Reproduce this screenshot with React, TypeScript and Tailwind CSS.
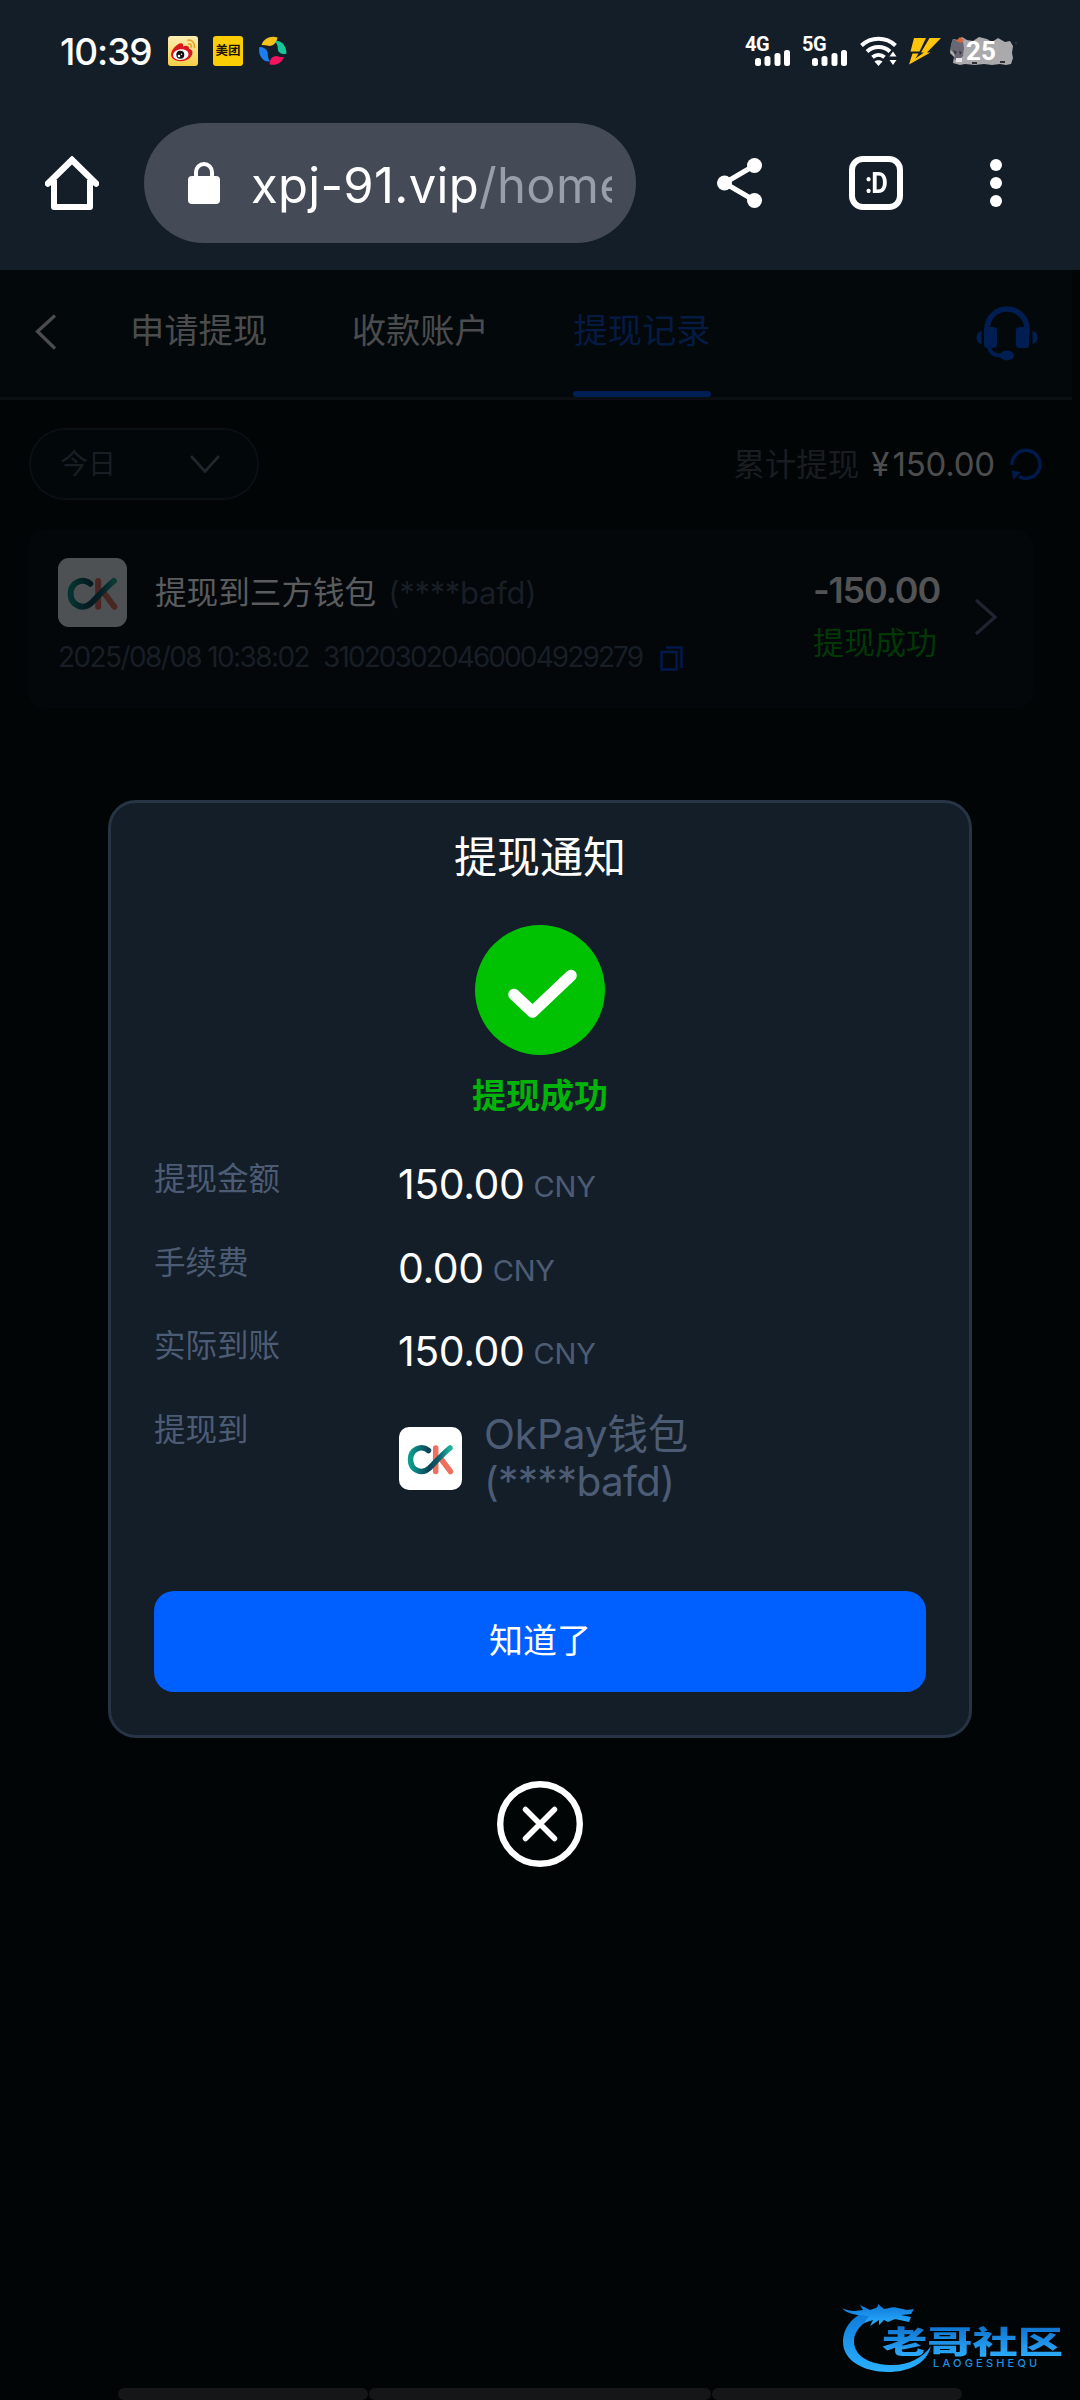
const AppIcons = () => {
   return (
      <div className="flex items-center gap-[15px]">
         <svg className="h-[30px] w-[30px]" viewBox="0 0 30 30">
            <defs>
               <linearGradient id="weibo" x1="0" y1="0" x2="0" y2="1">
                  <stop offset="0" stopColor="#fbeeb4" />
                  <stop offset="1" stopColor="#f7cf45" />
               </linearGradient>
            </defs>
            <rect width="30" height="30" rx="3" fill="url(#weibo)" />
            <path
               d="M3 18.5C3 14 9 7.5 13 7.3c2.200 0 2.400 1.600 2 3.200 2.500-1.200 6.300-1.300 6 2.200 3 .8 4 3 3.300 5.300C23 22.500 18 25.200 13 25.200 7.500 25.200 3 22.500 3 18.500Z"
               fill="#d9181e"
            />
            <ellipse cx="12.800" cy="18.600" rx="7.800" ry="5.300" fill="#fff" transform="rotate(-6 12.800 18.600)" />
            <circle cx="12.300" cy="18.800" r="4" fill="#111" />
            <circle cx="11" cy="20" r="1.300" fill="#fff" />
            <circle cx="13.500" cy="18.200" r=".7" fill="#fff" />
            <path d="M20 4.300c4-.7 7.300 2.800 6.300 7M20.500 8c2-.3 3.300 1.200 2.700 3" stroke="#e9a32a" strokeWidth="1.700" fill="none" strokeLinecap="round" />
         </svg>
         <div className="flex h-[30px] w-[30px] items-center justify-center rounded-[3px] bg-[#fccc05]">
            <span className="text-[12.5px] leading-none font-bold text-[#1c1400]">美团</span>
         </div>
         <svg className="h-[30px] w-[30px]" viewBox="0 0 30 30">
            <path d="M3.500 9C6 2 13-.5 19.500 1.500c-.5 4.500-3 7.500-7.500 8.500Q7 9 3.500 9Z" fill="#f6c21b" />
            <path d="M17.500 5.500c5-2 11 4 11 12-4 1.500-7 0-8.500-3Q20 9 17.500 5.500Z" fill="#19c79a" />
            <path d="M26 21c-2.500 6.500-8.500 9-14.500 7.300 0-4.500 2.500-8 7-8.300Q22 21.500 26 21Z" fill="#f3145c" />
            <path d="M1.500 11C6 11 9.500 13.500 9.800 17.500q-.3 4 2 8C4.500 26.500-.5 18 1.500 11Z" fill="#1d7df2" />
         </svg>
      </div>
   )
}

const Signal = ({ label }: { label: string }) => {
   return (
      <div className="relative h-[30px] w-[45px]">
         <span className="absolute -top-[2px] left-0 font-[Roboto] text-[20px] leading-none font-bold tracking-[-0.5px]">{label}</span>
         <svg className="absolute right-0 bottom-0 h-4 w-[35px]" viewBox="0 0 35 16" fill="#fff">
            <rect x="0" y="8" width="6" height="8" rx="2.500" />
            <rect x="9.500" y="6" width="6" height="10" rx="2.500" />
            <rect x="19.500" y="3" width="6" height="13" rx="2.500" />
            <rect x="29" y="0" width="6" height="16" rx="2.500" />
         </svg>
      </div>
   )
}

const StatusBar = () => {
   return (
      <div className="flex h-[102px] items-center justify-between pr-[62px] pl-[60px]">
         <div className="flex items-center">
            <span className="w-[108px] text-[37px] leading-none font-medium tracking-[-1.1px] whitespace-nowrap">10:39</span>
            <AppIcons />
         </div>
         <div className="flex items-center">
            <Signal label="4G" />
            <div className="w-3" />
            <Signal label="5G" />
            <svg className="ml-[13px] h-[30px] w-[38px]" viewBox="0 0 38 30" fill="none" stroke="#fff" strokeWidth="4">
               <path d="M1.500 9.500C11 .5 26 .5 35.500 9.500" />
               <path d="M7 15.500c6.500-6 16.500-6 23 0" />
               <path d="M12.500 21.300c3.500-3 8.500-3 12 0" />
               <path d="M14.500 25.500c2-1.800 6-1.800 8 0L18.500 30Z" fill="#fff" stroke="none" />
               <path d="M33 15.500l3.500 5h-7ZM33 29l3.500-5h-7Z" fill="#fff" stroke="none" />
            </svg>
            <svg className="ml-[10px] h-[28px] w-[34px]" viewBox="0 0 34 28" fill="#ffc40c">
               <path d="M6 1h12l-6.500 13.500H2.500Z" />
               <path d="M21.500 1H33L19 15.500h3.500L1 27.500 4.500 16.500h6L7.500 21.500 16 15.500h-3Z" />
            </svg>
            <div className="relative ml-[6px] h-[30px] w-[70px]">
               <svg className="h-[30px] w-[70px]" viewBox="0 0 70 30">
                  <path d="M3 9 5 3l5 1 4-3 5 3 6 1 6-4 8 2 5 3 6-4 7 4 5-1 3 5-1 7 1 5-2 6-5 1-6-1-8 1-8-1-9 1-10-1-5 1-7-2 1-6-4-4Z" fill="#aaa9ab" />
                  <path d="M3 9 5 3l5 2 5 1 1 6-1 8-5 5-4-2 1-5-4-4Z" fill="#696773" />
                  <path d="M8 5l4-4 4 3-3 3Z" fill="#d8653c" />
                  <path d="M5 14l4 2-2 3ZM11 15l3 1-2 3Z" fill="#38323c" />
                  <path d="M8 22h6v4H8Z" fill="#e8e6e8" />
                  <path d="M24 27h5M52 26h5M67 6l2 2" stroke="#303037" strokeWidth="2" />
               </svg>
               <span className="absolute top-[2px] left-[18px] font-[Roboto] text-[26px] leading-none font-bold">25</span>
            </div>
         </div>
      </div>
   )
}

const BrowserBar = () => {
   return (
      <div className="flex h-[168px] items-center pb-1.5 pl-[45px]">
         <svg className="h-[54px] w-[54px]" viewBox="0 0 54 54" fill="none" stroke="#fff" strokeWidth="6" strokeLinejoin="round">
            <path d="M3 27.500 27 4l24 23.500" strokeWidth="6.500" strokeLinecap="round" strokeLinejoin="miter" />
            <path d="M9 24v27h36V24" />
         </svg>
         <div className="ml-[45px] flex h-[120px] w-[492px] items-center rounded-full bg-[#444b56] pr-6 pl-11">
            <svg className="h-[42px] w-8 shrink-0" viewBox="0 0 32 42">
               <rect y="14" width="32" height="28" rx="4" fill="#fff" />
               <path d="M8 16v-6a8 8 0 0 1 16 0v6" fill="none" stroke="#fff" strokeWidth="4" />
            </svg>
            <div className="ml-[31px] w-[361px] overflow-hidden pt-[5px] text-[49px] leading-[64px] tracking-[0.3px] whitespace-nowrap">
               xpj-91.vip<span className="text-[#9a9ea8]">/home</span>
            </div>
         </div>
         <svg className="ml-[81px] h-[50px] w-[45px]" viewBox="0 0 45 50" fill="#fff">
            <path d="M37.500 7.500 7.500 25l30 17.500" fill="none" stroke="#fff" strokeWidth="5" />
            <circle cx="37.500" cy="7.500" r="7.500" />
            <circle cx="7.500" cy="25" r="7.500" />
            <circle cx="37.500" cy="42.500" r="7.500" />
         </svg>
         <div className="ml-[87px] flex h-[54px] w-[54px] items-center justify-center rounded-[14px] border-[6px] border-white">
            <span className="font-[Roboto] text-[30px] leading-none font-bold tracking-[-1px]">
               <span className="inline-block scale-x-[0.85]">:D</span>
            </span>
         </div>
         <div className="ml-[87px] flex flex-col gap-1.5">
            <div className="h-3 w-3 rounded-full bg-white" />
            <div className="h-3 w-3 rounded-full bg-white" />
            <div className="h-3 w-3 rounded-full bg-white" />
         </div>
      </div>
   )
}

const WalletLogo = ({ className }: { className: string }) => {
   return (
      <svg className={className} viewBox="0 0 63 63">
         <defs>
            <linearGradient id="okpay" x1="0" y1="0" x2="1" y2="0">
               <stop offset="0" stopColor="#0b9c8c" />
               <stop offset=".45" stopColor="#0c4459" />
               <stop offset=".7" stopColor="#0c5a68" />
               <stop offset="1" stopColor="#1fb39c" />
            </linearGradient>
         </defs>
         <rect width="63" height="63" rx="10" fill="#fff" />
         <g fill="none" strokeWidth="5.500" strokeLinecap="round" strokeLinejoin="round">
            <path d="M36.700 21v23.500M42 32l9.500 12.500" stroke="#ee6f5d" />
            <path d="M29.500 23.500C22 17.500 11.500 22.500 11.500 32.500c0 11 11.500 15.500 19 8.500 5-5 12-13 20.500-20" stroke="url(#okpay)" />
         </g>
      </svg>
   )
}

const PageHeader = () => {
   return (
      <div className="flex h-[130px] w-[1072px] items-center border-b-[3px] border-[#0c0f11] bg-[#03080b] pl-[35px]">
         <svg className="mb-[3px] h-[36px] w-[22px]" viewBox="0 0 22 36" fill="none" stroke="#4a4c4e" strokeWidth="3.300">
            <path d="M20 1.500 2.500 17.500l17.500 17" />
         </svg>
         <div className="ml-[73px] flex h-full gap-[84.500px] text-[34.300px] leading-none text-[#4b4c4d]">
            <div className="flex items-center pb-1">申请提现</div>
            <div className="flex items-center pb-1">收款账户</div>
            <div className="relative flex items-center pb-1 text-[#051b44]">
               提现记录
               <div className="absolute inset-x-0 bottom-0 h-1.5 rounded-full bg-[#001f55]" />
            </div>
         </div>
         <svg className="mb-px ml-[265px] h-[57px] w-[62px]" viewBox="0 0 62 57" fill="#001e52">
            <path d="M11 30V24a20 20 0 0 1 40 0v6" fill="none" stroke="#001e52" strokeWidth="5.500" />
            <path d="M8 25q0-3 3-3h6q4 0 4 3v15q0 3-4 3H11q-3 0-3-3ZM40 25q0-3 4-3h6q3 0 3 3v15q0 3-3 3h-6q-4 0-4-3Z" />
            <path d="M5.500 26v13Q.5 38 .5 32.500T5.500 26ZM56.500 26v13q5-1 5-6.500T56.500 26Z" />
            <path d="M13 42q2 9 12 8.500h6" fill="none" stroke="#001e52" strokeWidth="4" />
            <ellipse cx="31" cy="50.500" rx="7" ry="5" />
         </svg>
      </div>
   )
}

const FilterRow = () => {
   return (
      <div className="mt-7 flex h-[72px] items-center justify-between pr-[38px] pl-[29px]">
         <div className="flex h-full w-[230px] items-center justify-between rounded-full border-2 border-[#0a0f13] bg-[#02070a] pr-[37px] pl-[29px]">
            <span className="text-[28px] leading-none text-[#191e24]">今日</span>
            <svg className="h-[18px] w-[30px]" viewBox="0 0 30 18" fill="none" stroke="#20262c" strokeWidth="2.800">
               <path d="m1 1 14 15.500L29 1" />
            </svg>
         </div>
         <div className="flex items-center leading-none">
            <span className="pt-0.5 text-[31.500px] text-[#191d22]">累计提现</span>
            <span className="ml-3 text-[33px] text-[#4c4d4e]">
               <span className="mr-[3px]">¥</span>
               <span className="tracking-[-0.2px]">150.00</span>
            </span>
            <svg className="ml-[15px] h-8 w-8" viewBox="0 0 32 32" fill="none" stroke="#001a4c" strokeWidth="3.500">
               <path d="M2 17A14 14 0 1 1 9 28.500" />
               <path d="M1.500 22.500 11 24l-7.500 8Z" fill="#001a4c" stroke="none" />
            </svg>
         </div>
      </div>
   )
}

const RecordCard = () => {
   return (
      <div className="mt-[30px] ml-7 flex h-[178px] w-[1005px] items-start rounded-[16px] bg-[#03070a] pl-[30px]">
         <div className="w-[755px] pt-[28px]">
            <div className="flex items-center leading-none">
               <div className="relative h-[69px] w-[69px]">
                  <WalletLogo className="h-full w-full" />
                  <div className="absolute inset-0 bg-[#03070a]/70" />
               </div>
               <span className="ml-7 text-[31.600px] text-[#5a5c5e]">提现到三方钱包</span>
               <span className="ml-3 text-[31px] tracking-[-0.3px] text-[#181e26]">(****bafd)</span>
            </div>
            <div className="mt-[16px] flex items-center text-[28px] leading-none whitespace-nowrap text-[#181e26]">
               <span className="w-[265px] tracking-[-1.6px]">2025/08/08 10:38:02</span>
               <span className="w-[337px] tracking-[-1.900px]">310203020460004929279</span>
               <svg className="mt-[3px] h-[25px] w-[23px]" viewBox="0 0 23 25" fill="none" stroke="#001a4c" strokeWidth="2.500">
                  <path d="M1.500 6h15v17.500h-15ZM6 1.500h15.500V22" />
               </svg>
            </div>
         </div>
         <div className="flex w-[124px] flex-col leading-none">
            <span className="mt-[42px] text-[36px] font-semibold tracking-[-1.200px] whitespace-nowrap text-[#525354]">-150.00</span>
            <span className="mt-[19px] text-[31px] text-[#023706]">提现成功</span>
         </div>
         <svg className="mt-[69px] ml-[37px] h-9 w-6" viewBox="0 0 24 36" fill="none" stroke="#1f2430" strokeWidth="3.300">
            <path d="m2 1 19 17L2 35" />
         </svg>
      </div>
   )
}

const DetailRow = ({ label, value }: { label: string; value: string }) => {
   return (
      <div className="flex h-[83.500px] items-start leading-none">
         <span className="w-[244px] pt-px text-[31.500px] text-[#4d5c75]">{label}</span>
         <div className="flex items-start pt-[2px]">
            <span className="text-[41px] tracking-[-0.400px] text-white">{value}</span>
            <span className="mt-[8px] ml-[9px] text-[29px] tracking-[-0.200px] text-[#4d5c75]">CNY</span>
         </div>
      </div>
   )
}

const rows = [
   { label: '提现金额', value: '150.00' },
   { label: '手续费', value: '0.00' },
   { label: '实际到账', value: '150.00' },
]

const NoticeModal = () => {
   return (
      <div className="absolute inset-x-0 top-[800px] flex flex-col items-center">
         <div className="flex h-[938px] w-[864px] flex-col items-center rounded-[28px] border-[3px] border-[#263445] bg-[#141e28] leading-none">
            <h1 className="mt-[33px] text-[43px]">提现通知</h1>
            <svg className="mt-[46px] h-[130px] w-[130px]" viewBox="0 0 130 130">
               <circle cx="65" cy="65" r="65" fill="#00c202" />
               <path d="M39 69.500 57.500 87 96 50.500" fill="none" stroke="#fff" strokeWidth="11.500" strokeLinecap="round" strokeLinejoin="round" />
            </svg>
            <div className="mt-[24px] text-[34px] font-bold text-[#00b40a]">提现成功</div>
            <div className="mt-[49px] w-full pl-[43px]">
               {rows.map((row) => (
                  <DetailRow key={row.label} label={row.label} value={row.value} />
               ))}
               <div className="flex items-start">
                  <span className="w-[245px] pt-px text-[31.500px] text-[#4d5c75]">提现到</span>
                  <WalletLogo className="mt-[14px] h-[63px] w-[63px]" />
                  <div className="-mt-[2px] ml-[22px] text-[40.500px] leading-[47px] tracking-[-0.100px] text-[#4d5c75]">
                     OkPay钱包
                     <br />
                     <span className="tracking-[-0.700px]">(****bafd)</span>
                  </div>
               </div>
            </div>
            <button className="mt-auto mb-[43px] h-[101px] w-[772px] rounded-[20px] bg-[#0060ff] pb-0.5 text-[34px] text-white">知道了</button>
         </div>
         <svg className="mt-[43px] h-[86px] w-[86px]" viewBox="0 0 86 86" fill="none" stroke="#fff">
            <circle cx="43" cy="43" r="39.800" strokeWidth="6.400" />
            <path d="m28.500 28.500 29 29M57.500 28.500l-29 29" strokeWidth="5.500" strokeLinecap="round" />
         </svg>
      </div>
   )
}

const Watermark = () => {
   return (
      <div className="absolute top-[2298px] left-[842px] h-[76px] w-[224px]">
         <svg className="h-full w-[92px]" viewBox="0 0 92 76">
            <defs>
               <linearGradient id="dragon" x1="0" y1="0" x2="0" y2="1">
                  <stop offset="0" stopColor="#0d78d8" />
                  <stop offset="1" stopColor="#2bb0ff" />
               </linearGradient>
            </defs>
            <g fill="url(#dragon)">
               <path d="M28 12C9 18 1 31 1 44c0 18 20 30 45 30 20 0 39-8 43-26-8 12-23 19-38 19C29 67 12 59 12 43c0-10 8-18 19-23Z" />
               <path d="M0 10c8 4 15 3 21 2l-3-5 10 5c6-2 8-2 8-6l6 5c6-1 9-3 14-1l9 2 7-1-3 5-10 1 10 2-2 5-14-3-7 3-4-2-5 5v-5l-9 6 3-6-9 3 5-7C18 17 5 17 0 10Z" />
            </g>
         </svg>
         <div className="absolute top-[27px] left-[40px] origin-left scale-x-[1.46] bg-gradient-to-b from-[#0f70cc] to-[#2fb0ff] bg-clip-text text-[31px] leading-[34px] font-black whitespace-nowrap text-transparent">
            老哥社区
         </div>
         <div className="absolute top-[60px] left-[91px] text-[11px] leading-none font-medium tracking-[3.200px] text-[#1f8fe0]">LAOGESHEQU</div>
      </div>
   )
}

export default function App() {
   return (
      <div className="relative flex h-[2400px] w-[1080px] flex-col overflow-hidden bg-[#020506] font-[Inter,'Noto_Sans_CJK_SC',sans-serif] text-white">
         <div className="bg-[#141e28]">
            <StatusBar />
            <BrowserBar />
         </div>
         <PageHeader />
         <FilterRow />
         <RecordCard />
         <div className="mt-auto flex h-3 gap-px pl-[118px]">
            <div className="w-[250px] rounded-md bg-[#141617]" />
            <div className="w-[342px] rounded-md bg-[#141617]" />
            <div className="w-[250px] rounded-md bg-[#141617]" />
         </div>
         <NoticeModal />
         <Watermark />
      </div>
   )
}
